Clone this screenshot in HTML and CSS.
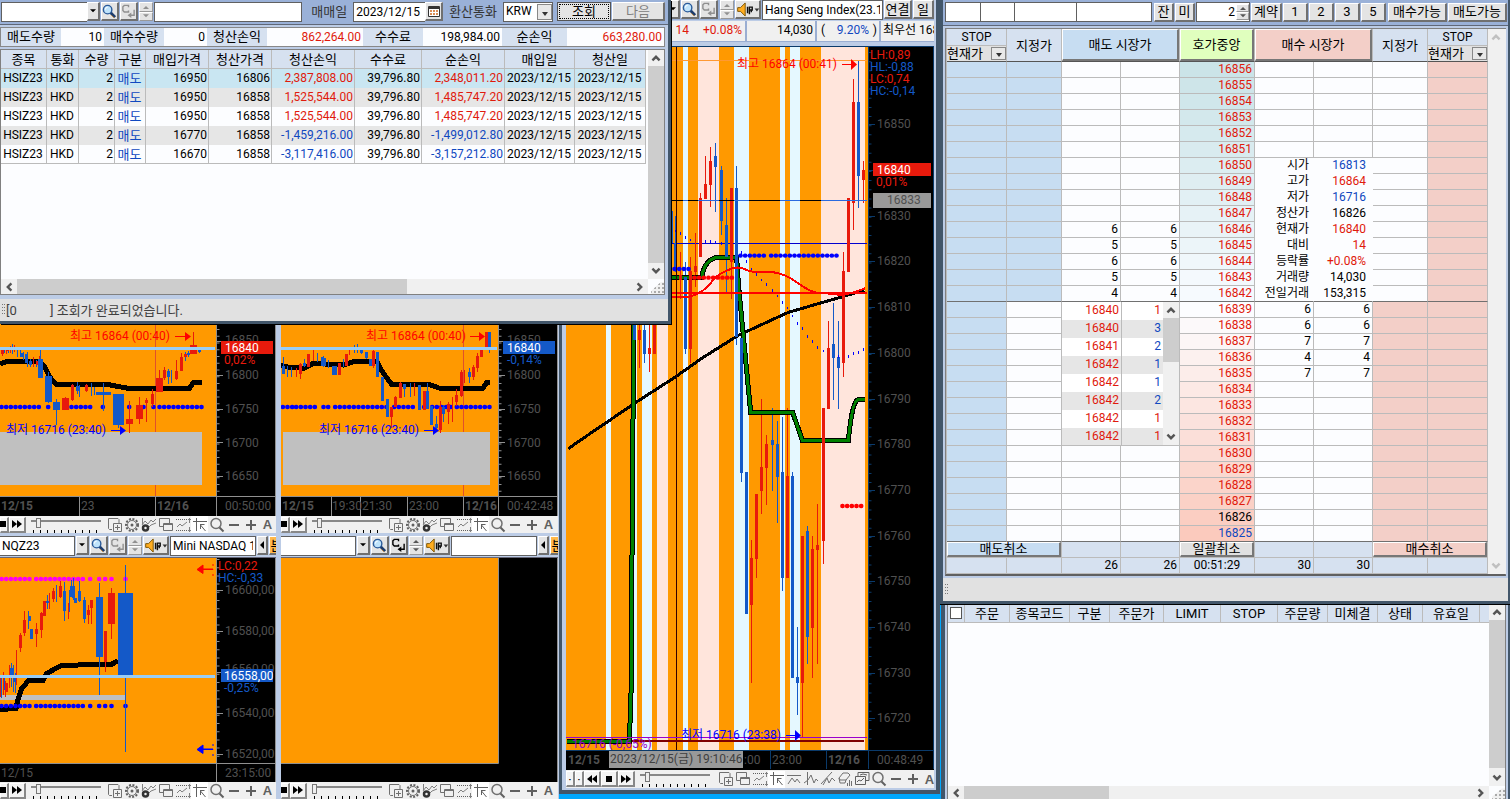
FILE: index.html
```html
<!DOCTYPE html>
<html lang="ko">
<head>
<meta charset="utf-8">
<title>해외선물 주문</title>
<link rel="stylesheet" href="styles.css">
</head>
<body>
<svg class="defs" aria-hidden="true">
  <symbol id="i-search" viewBox="0 0 16 16"><path d="M9 9l5 5" stroke="#1d3c6c" stroke-width="3"/><path d="M10 12l3 3" stroke="#c88a3c" stroke-width="1"/><circle cx="6" cy="6" r="4.5" fill="#bfe3fb" stroke="#2a5a9a" stroke-width="1.5"/><path d="M3.5 6a2.5 2.5 0 0 1 2.5-2.5" stroke="#fff" fill="none"/></symbol>
  <symbol id="i-c" viewBox="0 0 16 16"><path d="M8 3.500V1.500H3.500L2 3v4l1.500 1.500H8V7" fill="none" stroke="currentColor" stroke-width="1.500"/><path d="M14 6v6h-4" fill="none" stroke="currentColor" stroke-width="1.500"/><path d="M11 9l-4 3 4 3z" fill="currentColor"/></symbol>
  <symbol id="i-up" viewBox="0 0 8 5"><path d="M0 5l4-4 4 4z" fill="currentColor"/></symbol>
  <symbol id="i-down" viewBox="0 0 8 5"><path d="M0 0l4 4 4-4z" fill="currentColor"/></symbol>
  <symbol id="i-speaker" viewBox="0 0 24 16"><path d="M1 6h3l5-5v14l-5-5H1z" fill="#ffad1f" stroke="#7a5200"/><path d="M11.500 5v7M13.500 5.500h3v3h-3zM13.500 9v4M15.500 9v2" fill="none" stroke="#111" stroke-width="1.500"/><path d="M19 7h5l-2.500 3z" fill="#333"/></symbol>
  <symbol id="i-left" viewBox="0 0 8 8"><path d="M6 0L2 4l4 4z" fill="currentColor"/></symbol>
  <symbol id="i-chev-up" viewBox="0 0 10 10"><path d="M2 7l3-3 3 3" fill="none" stroke="currentColor" stroke-width="2"/></symbol>
  <symbol id="i-chev-down" viewBox="0 0 10 10"><path d="M2 3l3 3 3-3" fill="none" stroke="currentColor" stroke-width="2"/></symbol>
  <symbol id="i-chev-left" viewBox="0 0 10 10"><path d="M7 2L4 5l3 3" fill="none" stroke="currentColor" stroke-width="2"/></symbol>
  <symbol id="i-chev-right" viewBox="0 0 10 10"><path d="M3 2l3 3-3 3" fill="none" stroke="currentColor" stroke-width="2"/></symbol>
  <symbol id="i-cal" viewBox="0 0 12 11"><path d="M.5 .5h11v10H.5z" fill="#fff" stroke="#333"/><path d="M1 2h10" stroke="#333" stroke-width="2"/><path d="M2 5h8M2 8h8" stroke="#d06a20" stroke-width="1.500" stroke-dasharray="2 1"/></symbol>
  <symbol id="i-stop" viewBox="0 0 12 12"><path d="M3 3h6v6H3z"/></symbol>
  <symbol id="i-ff" viewBox="0 0 12 12"><path d="M1 2l5 4-5 4zM6 2l5 4-5 4z"/></symbol>
  <symbol id="i-rw" viewBox="0 0 12 12"><path d="M6 2L1 6l5 4zM11 2L6 6l5 4z"/></symbol>
  <symbol id="i-addpane" viewBox="0 0 16 16"><path d="M5 12.500H2.500l-1-1V1.500H11l1 1V6M6.500 6.500h8v8h-8zM10.500 8v5M8 10.500h5" fill="none" stroke="#707070"/></symbol>
  <symbol id="i-gear" viewBox="0 0 16 16"><circle cx="8" cy="8" r="6" fill="none" stroke="#606060" stroke-width="2" stroke-dasharray="2 1.500"/><circle cx="8" cy="8" r="4.500" fill="none" stroke="#707070"/><circle cx="8" cy="8" r="1.500" fill="#606060"/></symbol>
  <symbol id="i-chartgear" viewBox="0 0 16 16"><path d="M1.500 1v6M1 8l3-4 3 3 3-4 2 2 3-3M7 11l3-3 5-2" fill="none" stroke="#808080"/><circle cx="4.500" cy="11" r="2.500" fill="none" stroke="#333" stroke-width="2.500"/></symbol>
  <symbol id="i-windows" viewBox="0 0 16 16"><path d="M5 9.500H1.500v-8h10V6M5.500 6.500h9v7h-9zM5.500 7.500h9" fill="none" stroke="#707070"/></symbol>
  <symbol id="i-dotchart" viewBox="0 0 16 16"><path d="M1 2.500h11M1 13.500h11" stroke="#606060" stroke-dasharray="1 1"/><path d="M2 10l3-3 2 2 5-4M14.500 1v5M13 2.500h3M14.500 10v5M13 13.500h3" fill="none" stroke="#808080"/></symbol>
  <symbol id="i-cursor" viewBox="0 0 16 16"><path d="M4.500 1v13M1 4.500h14M8 7.500h4.500M8.500 7.500V12M8.500 8l5 6" fill="none" stroke="#606060"/></symbol>
  <symbol id="i-mag" viewBox="0 0 16 16"><circle cx="7" cy="6.500" r="5" fill="none" stroke="#707070" stroke-width="1.500"/><path d="M10.500 10.500l4 4" stroke="#606060" stroke-width="2"/></symbol>
  <symbol id="i-minus" viewBox="0 0 16 16"><path d="M3 8h10" stroke="#606060" stroke-width="2"/></symbol>
  <symbol id="i-plus" viewBox="0 0 16 16"><path d="M3 8h10M8 3v10" stroke="#606060" stroke-width="2"/></symbol>
  <symbol id="i-peak" viewBox="0 0 16 16"><path d="M1 4.500h14M2 13l4-6 3 4 2-3 3 4" fill="none" stroke="#707070"/></symbol>
  <symbol id="i-pulse" viewBox="0 0 16 16"><path d="M4.500 1v13M1 12l4-3 3-5 3 8 2-4 2 2" fill="none" stroke="#707070"/></symbol>
  <symbol id="i-slope" viewBox="0 0 16 16"><path d="M1 13L12 1M3 14l4-7 2 5 3-5 3 3" fill="none" stroke="#707070"/></symbol>
  <symbol id="i-eraser" viewBox="0 0 16 16"><path d="M2 7l4-5h5l2 2-4 5H3zM2 7l1 5h5l1-3M12.500 9v6M10.500 12v3M14.500 10v5" fill="none" stroke="#707070"/></symbol>
  <symbol id="i-multi" viewBox="0 0 16 16"><path d="M4 5V1.500h11v8h-3M1.500 5.500h10v8h-10zM3 11l2-2 2 1 3-3M6 4l3-1 4 1" fill="none" stroke="#606060"/></symbol>
</svg>
<main class="desktop">

<section class="win charts" aria-label="종합차트">
  <div class="pane">
    <svg class="plot" role="img" aria-label="16840">
      <rect class="or" width="217" height="496"/>
      <path d="M155.500 320V516" stroke="#e0502c"/>
      <g class="sk" transform="translate(0 270) scale(.33333)">
        <path class="ma" d="M0 283L20 274H120L132 288 150 322 168 343H320L385 355H568L580 338H606"/>
        <path class="dots b" d="M4 411H124M144 411h1M214 411H284M308 411h1M387 411h1M430 411h1M460 411h1M478 411H606"/>
        <path d="M0 486H606V645H0z" fill="#c0c0c0"/>
        <path class="wr" d="M8 235V258M20 230V252M32 228V248M44 225V245M102 262V292M120 258V290M218 342V392M260 342V366M276 342V368M388 393V488M419 380V462M439 385V456M458 358V412M478 300V365M494 292V330M530 270V330M545 250V302M581 185V252M196 380V420"/>
        <path class="wb" d="M14 232V250M26 230V250M38 222V252M52 232V260M62 238V262M72 245V270M82 246V292M92 268V290M110 270V292M122 240V322M145 305V398M169 388V465M232 335V372M240 345V382M274 340V378M284 350V376M310 338V423M355 372V475M506 298V342M516 300V338M556 245V272M566 243V262M598 232V250"/>
        <path class="br" d="M22 232V244M112 272V285M218 345V390M260 346V364M458 372V402M494 300V325M530 302V328M545 262V302M556 252V262M439 390V398M8 240V252"/>
        <path class="bb" d="M68 250V262M80 252V280M92 274V285M145 318V396M233 348V364M506 303V320M566 249V256M600 238V246"/>
        <path d="M186 384h21v36h-21zM378 447h21v14h-21zM408 405h21v41h-21zM468 324h21v41h-21zM570 225h21v26h-21z" fill="#e81a0c"/>
        <path d="M114 267h15v56h-15zM136 318h20v78h-20zM159 396h21v24h-21zM288 366h45v8h-45zM339 372h33v93h-33z" fill="#1459c8"/>
        <path d="M0 236H645" stroke="#99cdf5" stroke-width="9"/>
      </g>
      <rect x="217" width="60" height="516"/><rect y="497" width="277" height="20"/>
      <path d="M0 496.500H277M216.500 0V516M79.500 497v19M155.500 497v19M275.500 0V516" stroke="#909090"/>
      <path d="M218 329V492" stroke="#909090" stroke-width="3" stroke-dasharray="1 5.740"/>
      <path d="M217 341.500h6M217 375.500h6M217 409.500h6M217 442.500h6M217 476.500h6" stroke="#909090"/>
      <g class="ax"><text x="225" y="344">16850</text><text x="225" y="379">16800</text><text x="225" y="413">16750</text><text x="225" y="447">16700</text><text x="225" y="480">16650</text>
      <text x="225" y="510">00:50:00</text><text x="81" y="510">23</text><text class="bd" x="1" y="510">12/15</text><text class="bd" x="157" y="510">12/16</text></g>
      <rect x="221" y="341" width="52" height="13" fill="#e81a0c"/><text x="225" y="352" fill="#fff">16840</text>
      <text x="224" y="364" fill="#e81a0c">0,02%</text>
      <text x="70" y="340" fill="#f00">최고 16864 (00:40)</text><path d="M175 336h10v-4l6 4.500-6 4.500v-4h-10z" fill="#f00"/>
      <text x="6" y="434" fill="#00f">최저 16716 (23:40)</text><path d="M111 430h9v-4l6 4.500-6 4.500v-4h-9z" fill="#00f"/>
    </svg>
    <div class="tools">
      <button class="b3 half" aria-label="정지"><svg><use href="#i-stop"/></svg></button><button class="b3" aria-label="빨리"><svg><use href="#i-ff"/></svg></button>
      <input type="range" value="8" aria-label="확대">
      <button class="ic" aria-label="추가"><svg><use href="#i-addpane"/></svg></button><button class="ic" aria-label="설정"><svg><use href="#i-gear"/></svg></button><button class="ic" aria-label="지표"><svg><use href="#i-chartgear"/></svg></button><button class="ic" aria-label="창"><svg><use href="#i-windows"/></svg></button><button class="ic" aria-label="범위"><svg><use href="#i-dotchart"/></svg></button><button class="ic on" aria-label="십자선"><svg><use href="#i-cursor"/></svg></button><button class="ic" aria-label="돋보기"><svg><use href="#i-mag"/></svg></button><button class="ic" aria-label="축소"><svg><use href="#i-minus"/></svg></button><button class="ic" aria-label="확대"><svg><use href="#i-plus"/></svg></button><button class="ic">A</button>
    </div>
  </div>

  <div class="pane">
    <svg class="plot" role="img" aria-label="16840">
      <rect class="or" width="218" height="496"/>
      <path d="M182.500 320V516" stroke="#e0502c"/>
      <g class="sk" transform="translate(-11 320) scale(.33333)">
        <path class="ma" d="M33 137L60 142 100 145 130 130 220 135 255 124H320L340 160 365 193H475L510 205H638L650 187H660"/>
        <path class="dots b" d="M38 261H68M78 261H145M160 261H180M195 261H355M372 261H440M462 261h1M486 261H545M560 261H660"/>
        <path d="M39 336H660V494H39z" fill="#c0c0c0"/>
        <path class="wr" d="M80 145V170M92 128V176M130 90V122M240 86V105M365 262V325M377 228V262M391 185V233M434 188V228M311 90V145M512 243V338M535 245V312M548 232V305M559 207V258M584 150V188M610 135V180M623 100V155M574 150V230"/>
        <path class="wb" d="M40 112V161M52 138V170M64 140V172M103 118V142M142 98V127M160 107V140M175 120V145M220 118V142M253 75V100M262 72V100M274 85V103M290 95V118M403 192V232M421 190V230M472 188V268M499 288V330M520 255V305M598 145V190M658 36V100"/>
        <path class="br" d="M92 132V162M116 103V140M209 128V164M230 102V137M311 94V138M365 262V290M377 232V262M392 190V233M464 213V270M512 260V330M535 252V276M559 225V247M575 155V228M610 142V172M623 108V144M635 85V111M650 36V82"/>
        <path class="bb" d="M40 138V161M103 128V138M157 110V137M163 115V137M191 137V164M197 137V164M274 88V98M289 97V115M301 118V137M323 97V172M338 170V243M352 237V290M403 192V206M448 195V270M472 213V268M484 258V316M500 313V325M520 260V282M598 156V172M658 36V80"/>
        <path d="M33 85H681" stroke="#99cdf5" stroke-width="9"/>
      </g>
      <rect x="218" width="60" height="516"/><rect y="497" width="278" height="20"/>
      <path d="M0 496.500H277M217.500 0V516M50.500 497v19M79.500 497v19M126.500 497v19M182.500 497v19M276.500 0V516" stroke="#909090"/>
      <path d="M219 329V492" stroke="#909090" stroke-width="3" stroke-dasharray="1 5.740"/>
      <path d="M218 341.500h6M218 375.500h6M218 409.500h6M218 442.500h6M218 476.500h6" stroke="#909090"/>
      <g class="ax"><text x="226" y="344">16850</text><text x="226" y="379">16800</text><text x="226" y="413">16750</text><text x="226" y="447">16700</text><text x="226" y="480">16650</text>
      <text x="226" y="510">00:42:48</text><text class="bd" x="1" y="510">12/15</text><text x="51" y="510">19:30</text><text x="81" y="510">21:30</text><text x="128" y="510">23:00</text><text class="bd" x="184" y="510">12/16</text></g>
      <rect x="222" y="341" width="52" height="13" fill="#1459c8"/><text x="226" y="352" fill="#fff">16840</text>
      <text x="226" y="364" fill="#1459c8">-0,14%</text>
      <text x="85" y="340" fill="#f00">최고 16864 (00:40)</text><path d="M189 336h9v-4l6 4.500-6 4.500v-4h-9z" fill="#f00"/>
      <text x="38" y="434" fill="#00f">최저 16716 (23:40)</text><path d="M143 430h9v-4l6 4.500-6 4.500v-4h-9z" fill="#00f"/>
    </svg>
    <div class="tools">
      <button class="b3 half" aria-label="정지"><svg><use href="#i-stop"/></svg></button><button class="b3" aria-label="빨리"><svg><use href="#i-ff"/></svg></button>
      <input type="range" value="8" aria-label="확대">
      <button class="ic" aria-label="추가"><svg><use href="#i-addpane"/></svg></button><button class="ic" aria-label="설정"><svg><use href="#i-gear"/></svg></button><button class="ic" aria-label="지표"><svg><use href="#i-chartgear"/></svg></button><button class="ic" aria-label="창"><svg><use href="#i-windows"/></svg></button><button class="ic" aria-label="범위"><svg><use href="#i-dotchart"/></svg></button><button class="ic on" aria-label="십자선"><svg><use href="#i-cursor"/></svg></button><button class="ic" aria-label="돋보기"><svg><use href="#i-mag"/></svg></button><button class="ic" aria-label="축소"><svg><use href="#i-minus"/></svg></button><button class="ic" aria-label="확대"><svg><use href="#i-plus"/></svg></button><button class="ic">A</button>
    </div>
  </div>

  <div class="pane">
    <div class="symbar">
      <input class="code" value="NQZ23" aria-label="종목코드"><button class="bt dd" aria-label="목록"><svg><use href="#i-down"/></svg></button><button class="bt sq" aria-label="검색"><svg><use href="#i-search"/></svg></button><button class="bt sq dim" aria-label="연속"><svg><use href="#i-c"/></svg></button><span class="spin"><button aria-label="위"><svg><use href="#i-up"/></svg></button><button aria-label="아래"><svg><use href="#i-down"/></svg></button></span><button class="bt spk" aria-label="알림"><svg><use href="#i-speaker"/></svg></button><input class="name" value="Mini NASDAQ 10" aria-label="종목명"><button class="bt nar" aria-label="이전"><svg><use href="#i-left"/></svg></button><button class="bt min">분</button>
    </div>
    <svg class="plot" role="img" aria-label="16558,00">
      <rect class="or" width="217" height="205"/>
      <g class="sk" transform="translate(0 -28) scale(.33333)">
        <path d="M0 502H377" stroke="#c0c0c0" stroke-width="14"/>
        <path class="ma" d="M0 539L48 535 52 515 65 475 85 453H128L140 430 185 406 335 403 353 392"/>
        <path class="dots m" d="M4 147H50M60 147H95M108 147H260M270 147h6M297 147h1M315 147h1M334 147h1M376 147h1"/>
        <path class="dots b" d="M4 528H50M60 528H95M108 528H260M270 528h6M297 528h1M315 528h1M334 528h1M376 528h1"/>
        <path class="wr" d="M2 440V500M10 425V495M18 452V500M30 405V475M49 360V465M61 308V365M74 243V318M109 280V350M124 245V325M148 190V237M161 173V215M182 152V205M205 220V267M265 225V282M274 210V282M316 303V426M334 173V326"/>
        <path class="wb" d="M6 445V505M14 440V480M36 400V470M40 405V485M47 430V490M87 243V297M143 195V237M170 165V215M193 155V272M209 180V245M214 150V200M220 145V210M240 152V215M253 200V280M298 160V495M376 105V665"/>
        <path class="br" d="M61 315V353M74 270V310M109 297V312M124 250V300M133 213V258M161 183V207M182 168V200M265 240V256M274 210V234M316 303V396M20 460V485"/>
        <path class="bb" d="M89 258V274M94 297V326M143 213V220M193 183V243M214 168V200M220 168V205M227 205V218M240 183V213M253 210V267M36 415V440M43 440V455"/>
        <path d="M324 189h21v93h-21z" fill="#e81a0c"/><path d="M288 201h21v180h-21zM354 189h45v246h-45z" fill="#1459c8"/>
        <path d="M0 439H645" stroke="#99cdf5" stroke-width="9"/>
      </g>
      <path d="M213 11.500H203v4l-6-4 6-4.500v4h10zM213 6v2M213 16v2" fill="#f00" stroke="#f00"/><path d="M213 191.500H203v4l-6-4 6-4.500v4h10zM213 186v2M213 196v2" fill="#00f" stroke="#00f"/>
      <rect x="217" width="60" height="226"/><rect y="206" width="277" height="20"/>
      <path d="M0 205.500H277M216.500 0V226M275.500 0V226" stroke="#909090"/>
      <path d="M218 1V204" stroke="#909090" stroke-width="3" stroke-dasharray="1 7.200"/>
      <path d="M217 32.500h6M217 73.500h6M217 114.500h6M217 155.500h6M217 196.500h6" stroke="#909090"/>
      <g class="ax"><text x="225" y="36">16600,00</text><text x="225" y="77">16580,00</text><text x="225" y="115">16560,00</text><text x="225" y="159">16540,00</text><text x="225" y="200">16520,00</text><text x="225" y="219">23:15:00</text><text x="1" y="219">12/15</text></g>
      <text x="218" y="12" fill="#e81a0c">LC:0,22</text><text x="218" y="24" fill="#1459c8">HC:-0,33</text>
      <rect x="221" y="111" width="52" height="13" fill="#1459c8"/><text x="224" y="122" fill="#fff">16558,00</text><text x="224" y="134" fill="#1459c8">-0,25%</text>
    </svg>
    <div class="tools">
      <button class="b3 half" aria-label="정지"><svg><use href="#i-stop"/></svg></button><button class="b3" aria-label="빨리"><svg><use href="#i-ff"/></svg></button>
      <input type="range" value="8" aria-label="확대">
      <button class="ic" aria-label="추가"><svg><use href="#i-addpane"/></svg></button><button class="ic" aria-label="설정"><svg><use href="#i-gear"/></svg></button><button class="ic" aria-label="지표"><svg><use href="#i-chartgear"/></svg></button><button class="ic" aria-label="창"><svg><use href="#i-windows"/></svg></button><button class="ic" aria-label="범위"><svg><use href="#i-dotchart"/></svg></button><button class="ic on" aria-label="십자선"><svg><use href="#i-cursor"/></svg></button><button class="ic" aria-label="돋보기"><svg><use href="#i-mag"/></svg></button><button class="ic" aria-label="축소"><svg><use href="#i-minus"/></svg></button><button class="ic" aria-label="확대"><svg><use href="#i-plus"/></svg></button><button class="ic">A</button>
    </div>
  </div>

  <div class="pane">
    <div class="symbar">
      <input class="code" aria-label="종목코드"><button class="bt dd" aria-label="목록"><svg><use href="#i-down"/></svg></button><button class="bt sq" aria-label="검색"><svg><use href="#i-search"/></svg></button><button class="bt sq" aria-label="연속"><svg><use href="#i-c"/></svg></button><span class="spin dark"><button aria-label="위"><svg><use href="#i-up"/></svg></button><button aria-label="아래"><svg><use href="#i-down"/></svg></button></span><button class="bt spk" aria-label="알림"><svg><use href="#i-speaker"/></svg></button><input class="name" aria-label="종목명"><button class="bt nar" aria-label="이전"><svg><use href="#i-left"/></svg></button><button class="bt min">분</button>
    </div>
    <svg class="plot" role="img" aria-label="빈 차트">
      <rect class="or" width="218" height="205"/><rect x="218" width="60" height="226"/><rect y="206" width="278" height="20"/>
      <path d="M0 205.500H217.500V0M276.500 0V226" fill="none" stroke="#909090"/>
    </svg>
    <div class="tools">
      <button class="b3 half" aria-label="정지"><svg><use href="#i-stop"/></svg></button><button class="b3" aria-label="빨리"><svg><use href="#i-ff"/></svg></button>
      <input type="range" value="0" aria-label="확대">
      <button class="ic" aria-label="추가"><svg><use href="#i-addpane"/></svg></button><button class="ic" aria-label="설정"><svg><use href="#i-gear"/></svg></button><button class="ic" aria-label="지표"><svg><use href="#i-chartgear"/></svg></button><button class="ic" aria-label="창"><svg><use href="#i-windows"/></svg></button><button class="ic" aria-label="범위"><svg><use href="#i-dotchart"/></svg></button><button class="ic on" aria-label="십자선"><svg><use href="#i-cursor"/></svg></button><button class="ic" aria-label="돋보기"><svg><use href="#i-mag"/></svg></button><button class="ic" aria-label="축소"><svg><use href="#i-minus"/></svg></button><button class="ic" aria-label="확대"><svg><use href="#i-plus"/></svg></button><button class="ic">A</button>
    </div>
  </div>
</section>

<section class="win hang" aria-label="Hang Seng">
  <div class="symbar top">
    <button class="bt dd" aria-label="목록"><svg><use href="#i-down"/></svg></button><button class="bt sq" aria-label="검색"><svg><use href="#i-search"/></svg></button><button class="bt sq dim" aria-label="연속"><svg><use href="#i-c"/></svg></button><span class="spin"><button aria-label="위"><svg><use href="#i-up"/></svg></button><button aria-label="아래"><svg><use href="#i-down"/></svg></button></span><button class="bt spk" aria-label="알림"><svg><use href="#i-speaker"/></svg></button><input class="hname" value="Hang Seng Index(23.1" aria-label="종목명"><button class="bt link">연결</button><button class="bt day">일</button>
  </div>
  <div class="quote"><span class="q1 r"><b>14</b><b>+0.08%</b></span><span class="q2">14,030</span><span class="q3"><i>(</i><i class="u">9.20%</i><i>)</i></span><span class="q4">최우선 168</span></div>
  <svg class="plot" role="img" aria-label="Hang Seng 16840">
    <rect class="or" width="302" height="703"/>
    <path d="M40 0h5v703h-5zM66 0h5v703h-5zM76 0h10v703H76zM117 0h5v703h-5zM168 0h15v703h-15zM214 0h5v703h-5zM224 0h10v703h-10z" fill="#e5f8ff"/>
    <path d="M91 0h11v703H91zM132 0h21v703h-21zM255 0h44v703h-44z" fill="#ffe5dc"/>
    <g class="sk" transform="translate(-11 -47) scale(.33333)">
      <path d="M348 181H936" stroke="#ff9933" stroke-width="3"/>
      <path d="M33 730H936" stroke="#0000d0" stroke-width="3"/>
      <path class="wr" d="M253 960V1103M283 960V1115M376 755V897M406 770V1090M421 700V860M436 578V772M451 468V598M466 440V622M529 565V897M589 1620V2048M604 1482V1734M619 1197V1541M634 1305V1515M697 1223V1734M742 1608V2210M772 1608V2034M787 1512V1992M805 1224V1692M820 963V1227M865 756V1130M895 237V690M925 483V608"/>
      <path class="wb" d="M268 960V1088M361 648V815M391 785V1062M481 428V636M499 497V705M514 595V875M544 497V1035M559 965V1447M652 1223V1472M667 1263V1568M682 1251V1773M712 1415V2034M727 1880V2145M757 1578V1992M835 908V1200M850 963V1227M910 183V623"/>
      <path d="M40 1346L80 1318 180 1250 240 1209 364 1129 440 1075 550 1006 700 937 870 888 928 870" fill="none" stroke="#000" stroke-width="9"/>
      <path class="gk" d="M37 2224H223L228 2090 230 1810 234 1270 236 960 240 832H440Q450 775 490 772H545L550 850 587 1237H713L742 1321H880Q892 1199 910 1199H930"/>
      <path class="gg" d="M37 2224H223L228 2090 230 1810 234 1270 236 960 240 832H440Q450 775 490 772H545L550 850 587 1237H713L742 1321H880Q892 1199 910 1199H930"/>
      <path class="br" d="M253 990V1020M283 1043V1062M298 940V1062M376 825V840M406 812V1047M421 797V815M436 595V772M451 552V598M466 483V555M529 565V785M589 1674V1814M604 1482V1677M619 1401V1472M634 1332V1403M697 1428V1734M742 1608V2048M772 1647V1883M787 1635V1650M805 1224V1623M820 1043V1227M865 813V1088M880 595V815M895 306V608M925 510V540"/>
      <path class="bb" d="M238 940V1020M268 990V1062M349 632V730M361 730V812M391 832V1047M481 467V501M499 510V662M514 675V772M544 563V1010M559 1015V1420M574 1416V1842M652 1320V1335M667 1332V1430M682 1416V1734M712 1428V2034M727 2030V2048M757 1593V1910M835 1032V1073M850 1071V1103M910 306V527"/>
      <path class="dots b" d="M556 767H640M648 767H790M802 767H850M358 807H408"/>
      <path class="dots rd" d="M418 833H538M862 1518H928"/>
      <path d="M33 878H936" stroke="#f00" stroke-width="6"/>
      <path d="M348 890Q400 897 430 880T470 845 520 810Q545 796 570 808T650 816Q690 820 730 850T800 880 850 884 930 865" fill="none" stroke="#f00" stroke-width="6"/>
      <path class="tiny" d="M360 693h3M374 700h3M390 713h3M405 720h3M450 725h3M465 725h3M480 728h3M497 730h3M557 758h3M573 785h3M588 807h3M603 823h3M618 840h3M633 853h3M650 872h3M666 888h3M681 908h3M696 924h3M711 948h3M726 971h3M741 986h3M756 1010h3M771 1025h3M786 1043h3M803 1053h3M850 1070h3M878 1070h3M893 1060h3M908 1058h3M923 1048h3"/>
      <path d="M364 141V2250" stroke="#300" stroke-width="3"/>
      <path d="M348 601H936" stroke="#2a6ae0" stroke-width="3"/><path d="M348 601H384M399 601H429M492 601H537M582 601H675M735 601H798" stroke="#000" stroke-width="3"/>
      <path d="M33 2212H936" stroke="#90c" stroke-width="3"/><path d="M230 2222H927" stroke="#800000" stroke-width="6"/>
    </g>
    <text x="6" y="701" fill="#90c">16716 (-0,65%)</text>
    <rect x="302" width="66" height="723"/><rect y="704" width="368" height="19"/>
    <path d="M0 703.500H368M302.500 0V722M204.500 704v18M260.500 704v18M367.500 0V722" stroke="#0a3a6a"/>
    <path d="M304 5V700" stroke="#0a3a6a" stroke-width="3" stroke-dasharray="1 8.150"/>
    <path d="M303 77.500h6M303 123.500h6M303 169.500h6M303 214.500h6M303 260.500h6M303 306.500h6M303 352.500h6M303 397.500h6M303 443.500h6M303 489.500h6M303 534.500h6M303 580.500h6M303 626.500h6M303 671.500h6" stroke="#0a3a6a"/>
    <g class="ax"><text x="311" y="81">16850</text><text x="311" y="173">16830</text><text x="311" y="218">16820</text><text x="311" y="264">16810</text><text x="311" y="310">16800</text><text x="311" y="356">16790</text><text x="311" y="401">16780</text><text x="311" y="447">16770</text><text x="311" y="493">16760</text><text x="311" y="538">16750</text><text x="311" y="584">16740</text><text x="311" y="630">16730</text><text x="311" y="675">16720</text>
    <text x="311" y="717">00:48:49</text><text class="bd" x="2" y="717">12/15</text><text x="178" y="717">:00</text><text x="206" y="717">23:00</text><text class="bd" x="262" y="717">12/16</text></g>
    <text x="304" y="12" fill="#e81a0c">LH:0,89</text><text x="304" y="24" fill="#1459c8">HL:-0,88</text><text x="304" y="36" fill="#e81a0c">LC:0,74</text><text x="304" y="48" fill="#1459c8">HC:-0,14</text>
    <rect x="307" y="116" width="58" height="13" fill="#e81a0c"/><text x="311" y="127" fill="#fff">16840</text><text x="310" y="139" fill="#e81a0c">0,01%</text>
    <rect x="307" y="146" width="58" height="15" fill="#999"/><text x="321" y="157" fill="#505050">16833</text>
    <rect x="43" y="704" width="134" height="17" fill="#999"/><text x="44" y="716" fill="#404040">2023/12/15(금) 19:10:46</text>
    <text x="171" y="21" fill="#f00">최고 16864 (00:41)</text><path d="M276 17h9v-5l6 5.500-6 5.500v-5h-9z" fill="#f00"/>
    <text x="115" y="692" fill="#00f">최저 16716 (23:38)</text><path d="M220 688h9v-5l6 5.500-6 5.500v-5h-9z" fill="#00f"/>
  </svg>
  <div class="tools wide">
    <button class="b3 thin" aria-label="처음">·</button><button class="b3 thin" aria-label="이전">·</button><button class="b3" aria-label="되감기"><svg><use href="#i-rw"/></svg></button><button class="b3" aria-label="정지"><svg><use href="#i-stop"/></svg></button><button class="b3" aria-label="빨리"><svg><use href="#i-ff"/></svg></button>
    <input type="range" value="8" aria-label="확대">
    <button class="ic" aria-label="추가"><svg><use href="#i-addpane"/></svg></button><button class="ic" aria-label="창"><svg><use href="#i-windows"/></svg></button><button class="ic" aria-label="범위"><svg><use href="#i-dotchart"/></svg></button><button class="ic on" aria-label="십자선"><svg><use href="#i-cursor"/></svg></button><button class="ic" aria-label="고점"><svg><use href="#i-peak"/></svg></button><button class="ic" aria-label="수직선"><svg><use href="#i-pulse"/></svg></button><button class="ic" aria-label="추세선"><svg><use href="#i-slope"/></svg></button><button class="ic" aria-label="지우개"><svg><use href="#i-eraser"/></svg></button><button class="ic" aria-label="다중"><svg><use href="#i-multi"/></svg></button><button class="ic" aria-label="돋보기"><svg><use href="#i-mag"/></svg></button><button class="ic" aria-label="축소"><svg><use href="#i-minus"/></svg></button><button class="ic" aria-label="확대"><svg><use href="#i-plus"/></svg></button><button class="ic">A</button>
  </div>
</section>

<section class="win account" aria-label="청산내역">
  <div class="bar">
    <input class="acc" aria-label="계좌"><button class="bt dd" aria-label="목록"><svg><use href="#i-down"/></svg></button><button class="bt sq" aria-label="검색"><svg><use href="#i-search"/></svg></button><button class="bt sq dim" aria-label="연속"><svg><use href="#i-c"/></svg></button><span class="spin"><button aria-label="위"><svg><use href="#i-up"/></svg></button><button aria-label="아래"><svg><use href="#i-down"/></svg></button></span><input class="accname" aria-label="계좌명">
    <label for="dt">매매일</label><input id="dt" class="date" value="2023/12/15"><button class="bt cal" aria-label="달력"><svg><use href="#i-cal"/></svg></button>
    <label for="cur">환산통화</label><span class="drop cur"><select id="cur"><option>KRW</option></select></span>
    <button class="bt go">조회</button><button class="bt next">다음</button>
  </div>
  <dl class="sum">
    <dt>매도수량</dt><dd>10</dd><dt>매수수량</dt><dd>0</dd><dt>청산손익</dt><dd class="r">862,264.00</dd><dt>수수료</dt><dd>198,984.00</dd><dt>순손익</dt><dd class="r">663,280.00</dd>
  </dl>
  <div class="grid">
    <div class="body">
      <table class="trades">
        <colgroup><col style="width:46px"><col style="width:32px"><col style="width:36px"><col style="width:31px"><col style="width:63px"><col style="width:63px"><col style="width:83px"><col style="width:67px"><col style="width:83px"><col style="width:70px"><col style="width:71px"></colgroup>
        <thead><tr><th>종목<th>통화<th>수량<th>구분<th>매입가격<th>청산가격<th>청산손익<th>수수료<th>순손익<th>매입일<th>청산일</tr></thead>
        <tbody>
        <tr class="sel"><td>HSIZ23<td>HKD<td>2<td class="u">매도<td>16950<td>16806<td class="r">2,387,808.00<td>39,796.80<td class="r">2,348,011.20<td>2023/12/15<td>2023/12/15
        <tr><td>HSIZ23<td>HKD<td>2<td class="u">매도<td>16950<td>16858<td class="r">1,525,544.00<td>39,796.80<td class="r">1,485,747.20<td>2023/12/15<td>2023/12/15
        <tr><td>HSIZ23<td>HKD<td>2<td class="u">매도<td>16950<td>16858<td class="r">1,525,544.00<td>39,796.80<td class="r">1,485,747.20<td>2023/12/15<td>2023/12/15
        <tr><td>HSIZ23<td>HKD<td>2<td class="u">매도<td>16770<td>16858<td class="u">-1,459,216.00<td>39,796.80<td class="u">-1,499,012.80<td>2023/12/15<td>2023/12/15
        <tr><td>HSIZ23<td>HKD<td>2<td class="u">매도<td>16670<td>16858<td class="u">-3,117,416.00<td>39,796.80<td class="u">-3,157,212.80<td>2023/12/15<td>2023/12/15
        </tbody>
      </table>
    </div>
    <div class="vs"><button aria-label="위로"><svg><use href="#i-chev-up"/></svg></button><span class="th"></span><button aria-label="아래로"><svg><use href="#i-chev-down"/></svg></button></div>
    <div class="hs"><button aria-label="왼쪽"><svg><use href="#i-chev-left"/></svg></button><span class="th"></span><button aria-label="오른쪽"><svg><use href="#i-chev-right"/></svg></button></div>
    <div class="grip"></div>
  </div>
  <div class="status"><span class="handle"></span><span class="code0">[0</span><span>] 조회가 완료되었습니다.</span></div>
</section>

<section class="win list" aria-label="주문내역">
  <div class="grid">
    <div class="body">
      <table class="orders">
        <colgroup><col style="width:17px"><col style="width:45px"><col style="width:60px"><col style="width:40px"><col style="width:54px"><col style="width:57px"><col style="width:57px"><col style="width:50px"><col style="width:50px"><col style="width:45px"><col style="width:57px"><col style="width:10px"></colgroup>
        <thead><tr><th><input type="checkbox" aria-label="전체선택"><th>주문<th>종목코드<th>구분<th>주문가<th>LIMIT<th>STOP<th>주문량<th>미체결<th>상태<th>유효일<th></tr></thead>
      </table>
    </div>
    <div class="vs"><button aria-label="위로"><svg><use href="#i-chev-up"/></svg></button><span class="th"></span><button aria-label="아래로"><svg><use href="#i-chev-down"/></svg></button></div>
    <div class="hs"><button aria-label="왼쪽"><svg><use href="#i-chev-left"/></svg></button><span class="th"></span><button aria-label="오른쪽"><svg><use href="#i-chev-right"/></svg></button></div>
    <div class="grip"></div>
  </div>
</section>

<section class="win order" aria-label="주문">
  <div class="bar">
    <input class="w1" aria-label="계좌"><input class="w2" aria-label="비밀번호"><input class="w3" aria-label="종목"><input class="w4" aria-label="종목명"><button class="bt k">잔</button><button class="bt k">미</button><span class="num"><input value="2" aria-label="수량"><span class="spin dark"><button aria-label="위"><svg><use href="#i-up"/></svg></button><button aria-label="아래"><svg><use href="#i-down"/></svg></button></span></span><button class="bt ct">계약</button><button class="bt n">1</button><button class="bt n">2</button><button class="bt n">3</button><button class="bt n">5</button><button class="bt av">매수가능</button><button class="bt av">매도가능</button>
  </div>
  <div class="ladderbox">
  <table class="ladder">
    <colgroup><col style="width:60px"><col style="width:55px"><col style="width:59px"><col style="width:59px"><col style="width:75px"><col style="width:59px"><col style="width:59px"><col style="width:55px"><col style="width:60px"></colgroup>
    <thead><tr><th><div class="st">STOP</div><span class="drop"><select aria-label="매도 STOP 기준"><option>현재가</option></select></span><th>지정가<th colspan="2"><button class="hb sell">매도 시장가</button><th><button class="hb mid">호가중앙</button><th colspan="2"><button class="hb buy">매수 시장가</button><th>지정가<th><div class="st">STOP</div><span class="drop"><select aria-label="매수 STOP 기준"><option>현재가</option></select></span></tr></thead>
    <tbody class="ask">
    <tr style="--k:100%"><td><td><td><td><td>16856<td><td><td><td>
    <tr style="--k:94%"><td><td><td><td><td>16855<td><td><td><td>
    <tr style="--k:88%"><td><td><td><td><td>16854<td><td><td><td>
    <tr style="--k:82%"><td><td><td><td><td>16853<td><td><td><td>
    <tr style="--k:76%"><td><td><td><td><td>16852<td><td><td><td>
    <tr style="--k:70%"><td><td><td><td><td>16851<td><td><td><td>
    <tr class="inf" style="--k:62%"><td><td><td><td><td>16850<td>시가<td class="u">16813<td><td>
    <tr class="inf" style="--k:56%"><td><td><td><td><td>16849<td>고가<td class="r">16864<td><td>
    <tr class="inf" style="--k:48%"><td><td><td><td><td>16848<td>저가<td class="u">16716<td><td>
    <tr class="inf" style="--k:40%"><td><td><td><td><td>16847<td>정산가<td>16826<td><td>
    <tr class="inf" style="--k:33%"><td><td><td>6<td>6<td>16846<td>현재가<td class="r">16840<td><td>
    <tr class="inf" style="--k:26%"><td><td><td>5<td>5<td>16845<td>대비<td class="r">14<td><td>
    <tr class="inf" style="--k:18%"><td><td><td>6<td>6<td>16844<td>등락률<td class="r">+0.08%<td><td>
    <tr class="inf" style="--k:10%"><td><td><td>5<td>5<td>16843<td>거래량<td>14,030<td><td>
    <tr class="inf" style="--k:4%"><td><td><td>4<td>4<td>16842<td>전일거래<td>153,315<td><td>
    </tbody>
    <tbody class="bid">
    <tr style="--k:0%"><td><td><td colspan="2" rowspan="9" class="tk">
      <div class="ticks"><ol><li class="r"><span>16840</span><span>1</span></li><li class="r"><span>16840</span><span class="u">3</span></li><li class="r"><span>16841</span><span class="u">2</span></li><li class="r"><span>16842</span><span class="u">1</span></li><li class="r"><span>16842</span><span class="u">1</span></li><li class="r"><span>16842</span><span class="u">2</span></li><li class="r"><span>16842</span><span>1</span></li><li class="r"><span>16842</span><span>1</span></li></ol>
      <div class="vs"><button aria-label="위로"><svg><use href="#i-chev-up"/></svg></button><span class="th"></span><button aria-label="아래로"><svg><use href="#i-chev-down"/></svg></button></div></div>
      <td>16839<td>6<td>6<td><td>
    <tr style="--k:8%"><td><td><td>16838<td>6<td>6<td><td>
    <tr style="--k:14%"><td><td><td>16837<td>7<td>7<td><td>
    <tr style="--k:24%"><td><td><td>16836<td>4<td>4<td><td>
    <tr style="--k:32%"><td><td><td>16835<td>7<td>7<td><td>
    <tr style="--k:40%"><td><td><td>16834<td><td><td><td>
    <tr style="--k:46%"><td><td><td>16833<td><td><td><td>
    <tr style="--k:52%"><td><td><td>16832<td><td><td><td>
    <tr style="--k:58%"><td><td><td>16831<td><td><td><td>
    <tr style="--k:64%"><td><td><td><td><td>16830<td><td><td><td>
    <tr style="--k:72%"><td><td><td><td><td>16829<td><td><td><td>
    <tr style="--k:80%"><td><td><td><td><td>16828<td><td><td><td>
    <tr style="--k:86%"><td><td><td><td><td>16827<td><td><td><td>
    <tr style="--k:93%"><td><td><td><td><td class="k">16826<td><td><td><td>
    <tr style="--k:100%"><td><td><td><td><td class="u">16825<td><td><td><td>
    </tbody>
    <tfoot>
    <tr><td colspan="2"><button class="hb sell">매도취소</button><td><td><td><button class="hb all">일괄취소</button><td><td><td colspan="2"><button class="hb buy">매수취소</button>
    <tr><td><td><td>26<td>26<td class="c">00:51:29<td>30<td>30<td><td>
    </tfoot>
  </table>
  <div class="vs off"><button aria-label="위로"><svg><use href="#i-chev-up"/></svg></button><button aria-label="아래로"><svg><use href="#i-chev-down"/></svg></button></div>
  </div>
  <div class="status"><span class="handle"></span></div>
</section>
</main>
</body>
</html>
```
FILE: styles.css
```css
*{box-sizing:border-box}
html,body{height:100%}
body{margin:0;overflow:hidden;background:#00a8ff}
body,button,input,select{font-family:Roboto,"Noto Sans CJK KR",sans-serif;font-size:12px;line-height:15px}
button,input,select{margin:0;padding:0;color:#000;border-radius:0}
button,label,dt,th,.status,.drop select{font-size:13px}
button svg{display:block;margin:auto}
.defs{position:absolute;width:0;height:0}
.r{color:#e01a0c}
.u{color:#1048c0}

/* overlapping windows share one track grid */
.desktop{display:grid;height:100vh;grid-template-columns:minmax(0,559fr) minmax(0,112fr) minmax(0,269fr) minmax(0,570fr);grid-template-rows:minmax(0,324fr) minmax(0,280fr) minmax(0,190fr) minmax(0,5fr);background:#00a8ff}
.win{display:flex;flex-direction:column;min-width:0;min-height:0;overflow:hidden}
.charts{grid-area:1/1/5/2}
.hang{grid-area:1/2/4/4}
.account{grid-area:1/1/2/3}
.order{grid-area:1/4/3/5}
.list{grid-area:3/4/5/5}

/* buttons and fields */
.bt{flex:none;height:19px;background:#e4e4e4;border:solid;border-color:#fff #707070 #707070 #fff;border-width:1px 2px 2px 1px;overflow:hidden;white-space:nowrap;color:#000}
.dim{color:#909090}
.dd{width:13px}
.dd svg{width:6px;height:4px}
.sq{width:18px}
.sq svg{width:15px;height:15px}
.spin{display:flex;flex-direction:column;width:14px;height:19px;flex:none;color:#909090}
.spin.dark{color:#555}
.spin button{flex:1;min-height:0;background:#e4e4e4;border:1px solid;border-color:#fff #999 #999 #fff;color:inherit}
.spin svg{width:6px;height:4px}
.spk{width:26px}
.spk svg{width:24px;height:15px}
input:not([type]),.drop{height:20px;background:#fff;border:1px solid #606060;min-width:0}
input:not([type]){padding:0 2px}

/* chart panes */
.charts{display:grid;grid-template-columns:minmax(0,276fr) minmax(0,277fr);grid-template-rows:minmax(0,533fr) minmax(0,264fr);column-gap:5px;row-gap:2px;background:#bccce6;padding-right:1px}
.pane{display:flex;flex-direction:column;min-height:0;min-width:0;overflow:hidden}
.plot{display:block;width:100%;flex:1;min-height:0;background:#000;font-size:12px}
.or{fill:#f90}
.ax{fill:#505050}
.bd{font-weight:bold}
.sk{shape-rendering:crispEdges}
.ma{fill:none;stroke:#000;stroke-width:15}
.wr,.br{fill:none;stroke:#e81a0c;stroke-width:3}
.wb,.bb{fill:none;stroke:#1459c8;stroke-width:3}
.br,.bb{stroke-width:9}
.dots{fill:none;stroke-width:13;stroke-linecap:round;stroke-dasharray:1 13;shape-rendering:auto}
.dots.b{stroke:#00f}
.dots.m{stroke:#f0e}
.dots.rd{stroke:#f00}
.tiny{stroke:#00f;stroke-width:8}
.gk{fill:none;stroke:#000;stroke-width:15}
.gg{fill:none;stroke:#008000;stroke-width:9}
.symbar{display:flex;align-items:center;flex:none;height:23px;padding-bottom:1px;background:#bccce6;gap:1px;border-bottom:1px solid #667}
.symbar .code{flex:none;width:75px;border-left:0}
.symbar .name{flex:none;width:86px}
.nar{width:11px}
.nar svg{width:8px;height:8px}
.min{width:16px;background:#ffb84a}
.tools{display:flex;align-items:center;flex:none;height:17px;background:#f0f0f0;overflow:hidden}
.b3{flex:none;width:17px;height:16px;background:#f4f4f4;border:solid;border-color:#fff #888 #888 #fff;border-width:1px 2px 2px 1px}
.b3 svg{width:12px;height:12px}
.b3.half{width:9px}
.b3.half svg{margin-left:-4px}
.b3.thin{width:9px}
.tools input{appearance:none;flex:none;width:70px;height:16px;margin:0 5px;background:linear-gradient(#888,#888) 0 3px/100% 2px no-repeat,repeating-linear-gradient(90deg,#000 0 1px,transparent 1px 7px) 2px 13px/100% 3px no-repeat}
.tools input::-webkit-slider-thumb{appearance:none;width:5px;height:10px;margin-top:-4px;background:#eee;border:1px solid #777}
.ic{flex:none;width:17px;height:17px;background:none;border:0;color:#606060;font-weight:bold;font-family:"Liberation Sans",sans-serif}
.ic svg{width:16px;height:16px}
.ic.on{background:#fff}

/* Hang Seng window */
.hang{background:#bccce6;border:solid #42566a;border-width:0 4px 4px 3px;padding:0 2px 2px 4px}
.symbar.top{height:20px;padding-left:100px;background:#9ab1d8;border:0;overflow:hidden;gap:1px}
.symbar.top .dd{width:14px}
.symbar.top .spin{margin-left:1px}
.hname{flex:1}
.link{width:28px}
.day{width:21px}
.quote{display:flex;flex:none;height:21px;margin:1px 0 4px;padding-bottom:1px;gap:2px;background:#9aaed2;line-height:19px;white-space:nowrap;overflow:hidden}
.quote span{background:#f0f0f0;overflow:hidden;flex:none}
.quote b,.quote i{font:inherit}
.q1{width:179px;display:flex;justify-content:flex-end;gap:14px;padding-right:3px}
.q2{width:68px;text-align:right;padding-right:2px}
.q3{width:62px;display:flex;justify-content:space-between;padding:0 2px 0 4px}
.q3 i:first-child{margin-right:8px}
.quote .q4{flex:1;padding-left:2px}
.hang .plot{border-top:1px solid #0a3a6a}
.tools.wide{height:18px}
.wide input{margin:0 7px 0 5px}

/* account window */
.account{background:#bccce6;border:solid #42566a;border-width:0 3px 3px 0;box-shadow:1px 1px 0 #000}
.bar{display:flex;align-items:center;flex:none;height:25px;padding:0 3px 1px 1px;background:#9ab1d8;border-bottom:1px solid #606878}
.account .acc{flex:1;border-right:0}
.account .bar .sq{margin-left:1px}
.account .spin{margin:0 1px}
.accname{width:148px}
.bar label{margin:0 6px 0 9px;color:#333}
.bar .date{width:72px;border-right:0}
.cal{width:18px;margin-right:-3px}
.cal svg{width:12px;height:11px}
.drop{position:relative;display:inline-block}
.drop select{appearance:none;width:100%;height:100%;border:0;background:none;padding-left:2px}
.drop::after{content:"";position:absolute;right:4px;top:50%;border:3px solid transparent;border-top:4px solid #333;pointer-events:none}
.drop::before{content:"";position:absolute;right:0;top:1px;bottom:1px;width:13px;background:#e8e8e8;border:1px solid #888}
.cur{width:50px;margin-right:4px}
.cur select{font-size:12px}
.go{width:54px;border:1px solid #555;outline:1px dotted #000;outline-offset:-3px}
.next{width:53px;color:#808080;margin-left:1px}
.sum{display:flex;flex:none;margin:2px 3px 2px 0;height:20px;border:1px solid #888;line-height:18px}
.sum dt{background:#d6e1f0;text-align:center;width:60px;flex:none}
.sum dd{margin:0;background:#fcfdff;text-align:right;padding-right:2px;width:43px;flex:none}
.sum dd:nth-of-type(3){width:96px}
.sum dd:nth-of-type(4){width:79px}
.sum dt:nth-of-type(5){width:65px}
.sum dd:nth-of-type(5){flex:1}
.grid{display:grid;grid-template-columns:minmax(0,1fr) 16px;grid-template-rows:minmax(0,1fr) 15px;flex:1;min-height:0;background:#fcfdff;border:1px solid #808080;margin-right:3px}
.body{overflow:hidden;padding-right:2px}
table{border-collapse:separate;border-spacing:0;table-layout:fixed;width:100%}
td,th{padding:0;font-weight:normal;white-space:nowrap;overflow:hidden}
.trades th,.orders th{height:19px;background:#d6e1f0;border-right:1px solid #bbb;border-bottom:1px solid #bbb}
.trades td{height:19px;border-right:1px solid #bbb;text-align:right;padding-right:1px}
.trades td:nth-child(-n+2),.trades td:nth-child(4),.trades td:nth-child(n+10){text-align:center}
.trades td:nth-child(4){font-size:13px}
.trades tbody tr:nth-child(even){background:#e6e6e6}
.trades tbody tr.sel{background:#c9e6f2}
.trades tbody tr:last-child td{border-bottom:1px solid #bbb}
.vs,.hs{display:flex;background:#f0f0f0;color:#555}
.vs{flex-direction:column;justify-content:space-between}
.vs button,.hs button{flex:none;width:16px;height:16px;background:none;border:0;color:inherit}
.vs svg,.hs svg{width:12px;height:12px}
.th{background:#cdcdcd}
.account .vs .th{flex:1}
.hs .th{width:390px}
.hs button:last-child{margin-left:auto}
.grip{background:conic-gradient(#aaa 25%,transparent 0) 0 0/4px 4px,#f0f0f0;clip-path:polygon(80% 20%,100% 20%,100% 100%,20% 100%,20% 80%)}
.status{display:flex;align-items:center;flex:none;height:22px;margin-top:4px;background:#e1e1e1;color:#404040}
.handle{width:4px;height:12px;margin:0 1px;background:conic-gradient(#777 25%,transparent 0) 0 0/2px 3px}
.code0{width:44px}

/* order window */
.order{background:#bccce6;border:solid #42566a;border-width:0 2px 3px 3px;padding-left:2px;box-shadow:0 1px 0 #000}
.order .bar{padding:0 1px 1px 2px;margin-left:-2px;height:26px}
.order .bar input{width:36px;margin-right:-1px}
.order .bar .w2{width:35px}
.order .bar .w3{width:63px}
.order .bar .w4{flex:1;margin-right:2px}
.bar .k{width:20px;margin-right:1px}
.num{display:flex;align-items:center;width:54px;height:20px;background:#fff;border:1px solid #606060;margin-right:1px}
.order .bar .num input{flex:1;border:0;height:18px;text-align:right}
.num .spin{height:16px;width:13px}
.ct{width:31px;margin-right:1px}
.bar .n{width:25px;margin-right:1px}
.bar .av{width:59px;margin-left:1px}
.ladderbox{display:flex;flex:none;margin:2px 2px 0 0;border:1px solid #808080;border-bottom:2px solid #606060;background:#f0f0f0}
.ladder{flex:1;border-left:1px solid #bbb}
.ladderbox .vs.off{width:18px;flex:none;padding-right:2px;color:#c0c0c0}
.ladder th{height:33px;background:#d6e1f0;border-right:1px solid #bbb;border-bottom:1px solid #555}
.ladder th button{height:32px}
.st{height:15px;font-size:12px}
.ladder .drop{display:block;height:16px;border:0;border-top:1px solid #bbb;background:#e1e1e1}
.ladder .drop select{display:block;padding:0;background:none}
.hb{display:block;width:100%;height:15px;line-height:12px;border:solid;border-color:#fff #777 #777 #fff;border-width:1px 2px 2px 1px}
.sell{background:#c7ddf2}
.buy{background:#f3cfc8}
.mid{background:#e0ffbe}
.all{background:#e1e1e1}
.ladder td{height:16px;line-height:15px;border-right:1px solid #bbb;border-bottom:1px solid #bbb;text-align:right;padding-right:2px;background:#fcfdff}
.ladder tbody td:first-child,.ask td:nth-child(2){background:#c7ddf2}
.ladder tbody td:last-child,.bid td:nth-last-child(2){background:#f3cfc8}
.ladder tbody td:nth-last-child(5){color:#e01a0c}
.ladder tbody td.k:nth-last-child(5){color:#000}
.ladder tbody td.u:nth-last-child(5){color:#1048c0}
.ask td:nth-child(5){background:color-mix(in srgb,#cbe4e8 var(--k),#f8fbff)}
.bid td:nth-last-child(5){background:color-mix(in srgb,#fbcabd var(--k),#fcfdff)}
.ask tr:last-child td,.bid tr:last-child td{border-bottom-color:#707070}
.inf td:nth-child(6),.inf td:nth-child(7){border-color:#fcfdff;padding-right:6px}
.inf td:nth-child(6){padding-right:4px}
.ask tr:last-child td:nth-child(6),.ask tr:last-child td:nth-child(7){border-bottom-color:#707070}
.ladder .tk{padding:0}
.ticks{display:flex;height:143px}
.ticks ol{flex:1;margin:0;padding:0;list-style:none}
.ticks li{display:flex;height:18px;line-height:17px;background:#fff}
.ticks li:nth-child(even){background:#e6e6e6}
.ticks span{padding-right:2px}
.ticks li span:first-child{width:60px;border-right:1px solid #bbb}
.ticks li span:last-child{flex:1}
.ticks .vs .th{height:44px;margin-bottom:auto}
.ladder tfoot td{background:#d6e1f0}
.ladder tfoot td[colspan],.ladder tfoot tr:first-child td:nth-child(4){padding:0}
.ladder tfoot .c{text-align:center;padding:0}
.order .status{flex:1;margin:2px 0 0 -2px}

/* order list window */
.list{border:solid #42566a;border-width:0 2px 0 4px;margin-left:1px;background:#bccce6;padding-left:2px}
.list .grid{margin-right:2px;border-width:0 1px;grid-template-rows:minmax(0,1fr) 13px}
.list .body{padding:0}
.list .vs .th{height:148px;margin-bottom:auto}
.list .hs .th{width:145px}
.list .hs button{height:13px}
.orders input{display:block;appearance:none;width:12px;height:12px;margin:0 0 0 2px;background:#fff;border:1px solid #555}
```
